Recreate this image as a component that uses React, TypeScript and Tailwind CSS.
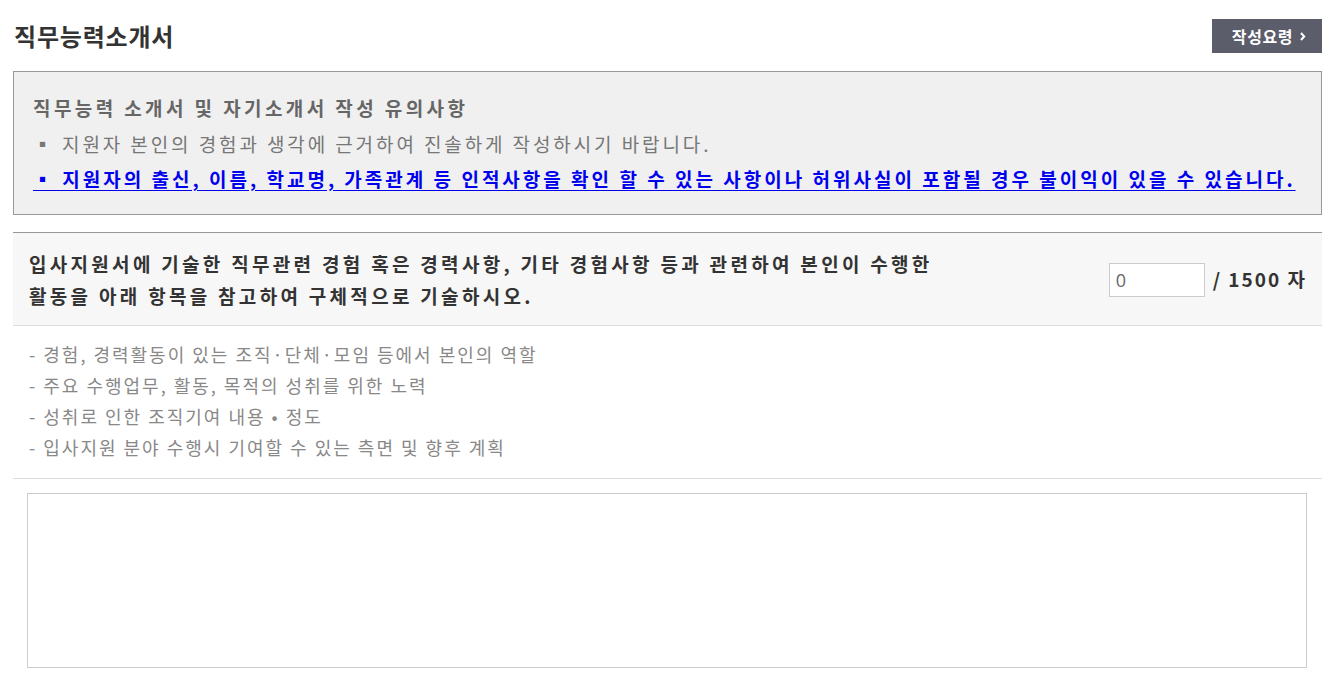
import { useState } from 'react';

const font = { fontFamily: '"Open Sans", "Noto Sans CJK KR", sans-serif' };

const guides = [
  '- 경험, 경력활동이 있는 조직·단체·모임 등에서 본인의 역할',
  '- 주요 수행업무, 활동, 목적의 성취를 위한 노력',
  '- 성취로 인한 조직기여 내용 • 정도',
  '- 입사지원 분야 수행시 기여할 수 있는 측면 및 향후 계획',
];

export default function App() {
  const [text, setText] = useState('');

  return (
    <div className="min-h-[691px] bg-white pl-[13px] pr-[18px] pt-[19px] font-['Noto_Sans_CJK_KR',sans-serif] text-[#333]">
      <div className="flex items-center justify-between">
        <h1 className="pl-[1px] text-[24px] font-bold leading-[34px] tracking-[0.8px] text-[#333]">직무능력소개서</h1>
        <button className="flex h-[34px] w-[110px] items-center justify-center gap-[7px] bg-[#5b5d6b] pl-[4px] text-[16px] font-bold tracking-[0.6px] text-white">
          작성요령
          <svg width="6" height="9" viewBox="0 0 6 9" fill="none">
            <path d="M1 1l3.2 3.5L1 8" stroke="white" strokeWidth="2" />
          </svg>
        </button>
      </div>

      <div className="mt-[18px] border border-[#999] bg-[#f0f0f0] px-[19px] pb-[17px] pt-[18px] text-[19px] leading-[35.5px] tracking-[3px]">
        <p className="font-bold tracking-[3.4px] text-[#666]">직무능력 소개서 및 자기소개서 작성 유의사항</p>
        <p className="tracking-[2.9px] text-[#777]">▪ 지원자 본인의 경험과 생각에 근거하여 진솔하게 작성하시기 바랍니다.</p>
        <p className="font-bold text-[#0000ee] underline underline-offset-[3px]">
          ▪ 지원자의 출신, 이름, 학교명, 가족관계 등 인적사항을 확인 할 수 있는 사항이나 허위사실이 포함될 경우 불이익이 있을 수 있습니다.
        </p>
      </div>

      <div className="mt-[17px] flex items-center justify-between border-t border-b border-t-[#999] border-b-[#ddd] bg-[#f7f7f7] pb-[13px] pl-[16px] pr-[15px] pt-[15px]">
        <p className="text-[19px] font-bold leading-[32px] tracking-[3.3px] text-[#333]">
          입사지원서에 기술한 직무관련 경험 혹은 경력사항, 기타 경험사항 등과 관련하여 본인이 수행한
          <br />
          활동을 아래 항목을 참고하여 구체적으로 기술하시오.
        </p>
        <div className="flex items-center gap-[8px]">
          <input
            readOnly
            value={text.length}
            style={font}
            className="h-[34px] w-[96px] border border-[#ccc] bg-white px-[6px] text-[18px] text-[#666] outline-none"
          />
          <span className="text-[19px] font-bold tracking-[2px] text-[#333]">/ 1500 자</span>
        </div>
      </div>

      <ul className="border-b border-[#ddd] pb-[15px] pl-[16px] pt-[13px] text-[18px] leading-[31px] tracking-[2px] text-[#888]">
        {guides.map((g) => (
          <li key={g}>{g}</li>
        ))}
      </ul>

      <div className="pl-[14px] pr-[15px] pt-[14px]">
        <textarea
          value={text}
          onChange={(e) => setText(e.target.value)}
          maxLength={1500}
          style={font}
          className="block h-[175px] w-full resize-none border border-[#ccc] p-3 text-[16px] text-[#333] outline-none"
        />
      </div>
    </div>
  );
}
